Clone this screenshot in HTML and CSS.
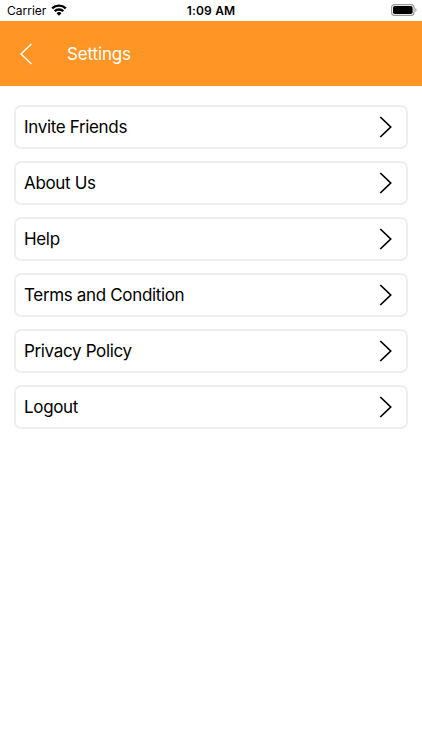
FILE: index.html
```html
<!DOCTYPE html>
<html lang="en">
<head>
<meta charset="utf-8">
<title>Settings</title>
<link rel="stylesheet" href="styles.css">
</head>
<body>
<header class="status">
  <div class="carrier"><span class="carrier-name">Carrier</span>
    <svg class="wifi" viewBox="0 0 16 12"><path d="M8 11.8 5.5 9.3a3.5 3.5 0 0 1 5 0Z"/><path class="arc" d="M3.7 7.2a6.2 6.2 0 0 1 8.6 0M1.2 4.4a9.8 9.8 0 0 1 13.6 0"/></svg>
  </div>
  <time class="time">1:09 AM</time>
  <svg class="battery" viewBox="0 0 26 12"><rect class="shell" x=".6" y=".6" width="22.4" height="10.8" rx="3"/><rect x="2" y="2" width="19.6" height="8" rx="1.8"/><path class="tip" d="M24.3 4v4q1.3-.5 1.3-2t-1.3-2Z"/></svg>
</header>
<nav class="bar">
  <svg class="back" viewBox="0 0 12 22"><path d="M11.4 1 1 11l10.4 10"/></svg>
  <h1 class="title">Settings</h1>
</nav>
<main class="list">
  <a class="row"><span class="label">Invite Friends</span><svg class="chevron" viewBox="0 0 13 22"><path d="m1.3 1 10.4 10L1.3 21"/></svg></a>
  <a class="row"><span class="label">About Us</span><svg class="chevron" viewBox="0 0 13 22"><path d="m1.3 1 10.4 10L1.3 21"/></svg></a>
  <a class="row"><span class="label">Help</span><svg class="chevron" viewBox="0 0 13 22"><path d="m1.3 1 10.4 10L1.3 21"/></svg></a>
  <a class="row"><span class="label">Terms and Condition</span><svg class="chevron" viewBox="0 0 13 22"><path d="m1.3 1 10.4 10L1.3 21"/></svg></a>
  <a class="row"><span class="label">Privacy Policy</span><svg class="chevron" viewBox="0 0 13 22"><path d="m1.3 1 10.4 10L1.3 21"/></svg></a>
  <a class="row"><span class="label">Logout</span><svg class="chevron" viewBox="0 0 13 22"><path d="m1.3 1 10.4 10L1.3 21"/></svg></a>
</main>
</body>
</html>
```
FILE: styles.css
```css
* { box-sizing: border-box; }
body { margin: 0; background: #fff; color: #000; font-family: Inter, sans-serif; }
svg { display: block; flex: none; }
.status { display: grid; grid-template-columns: 1fr auto 1fr; align-items: center; height: 21px; padding: 0 5px 1px 5px; font-size: 12px; }
.carrier { display: flex; align-items: center; gap: 5px; padding-left: 2px; }
.wifi { width: 16px; height: 12px; }
.arc { fill: none; stroke: #000; stroke-width: 2.4; }
.time { font-weight: 600; letter-spacing: .2px; }
.battery { width: 26px; height: 12px; justify-self: end; }
.shell { fill: none; stroke: #999; stroke-width: 1.1; }
.tip { fill: #999; }
.bar { display: flex; align-items: center; height: 65px; padding-left: 20px; gap: 35px; background: #ff9524; color: #fff; }
.back { width: 12px; height: 22px; fill: none; stroke: #fff; stroke-width: 1.5; }
.title { margin: 0; font-size: 17px; font-weight: 400; letter-spacing: -.15px; }
.list { display: flex; flex-direction: column; gap: 12px; padding: 19px 14px; }
.row { display: flex; align-items: center; justify-content: space-between; height: 44px; padding: 0 14px 0 8px; border: 2px solid #eee; border-radius: 7px; font-size: 17px; }
.label { letter-spacing: -.34px; }
.chevron { width: 13px; height: 22px; fill: none; stroke: #000; stroke-width: 1.7; }
```
